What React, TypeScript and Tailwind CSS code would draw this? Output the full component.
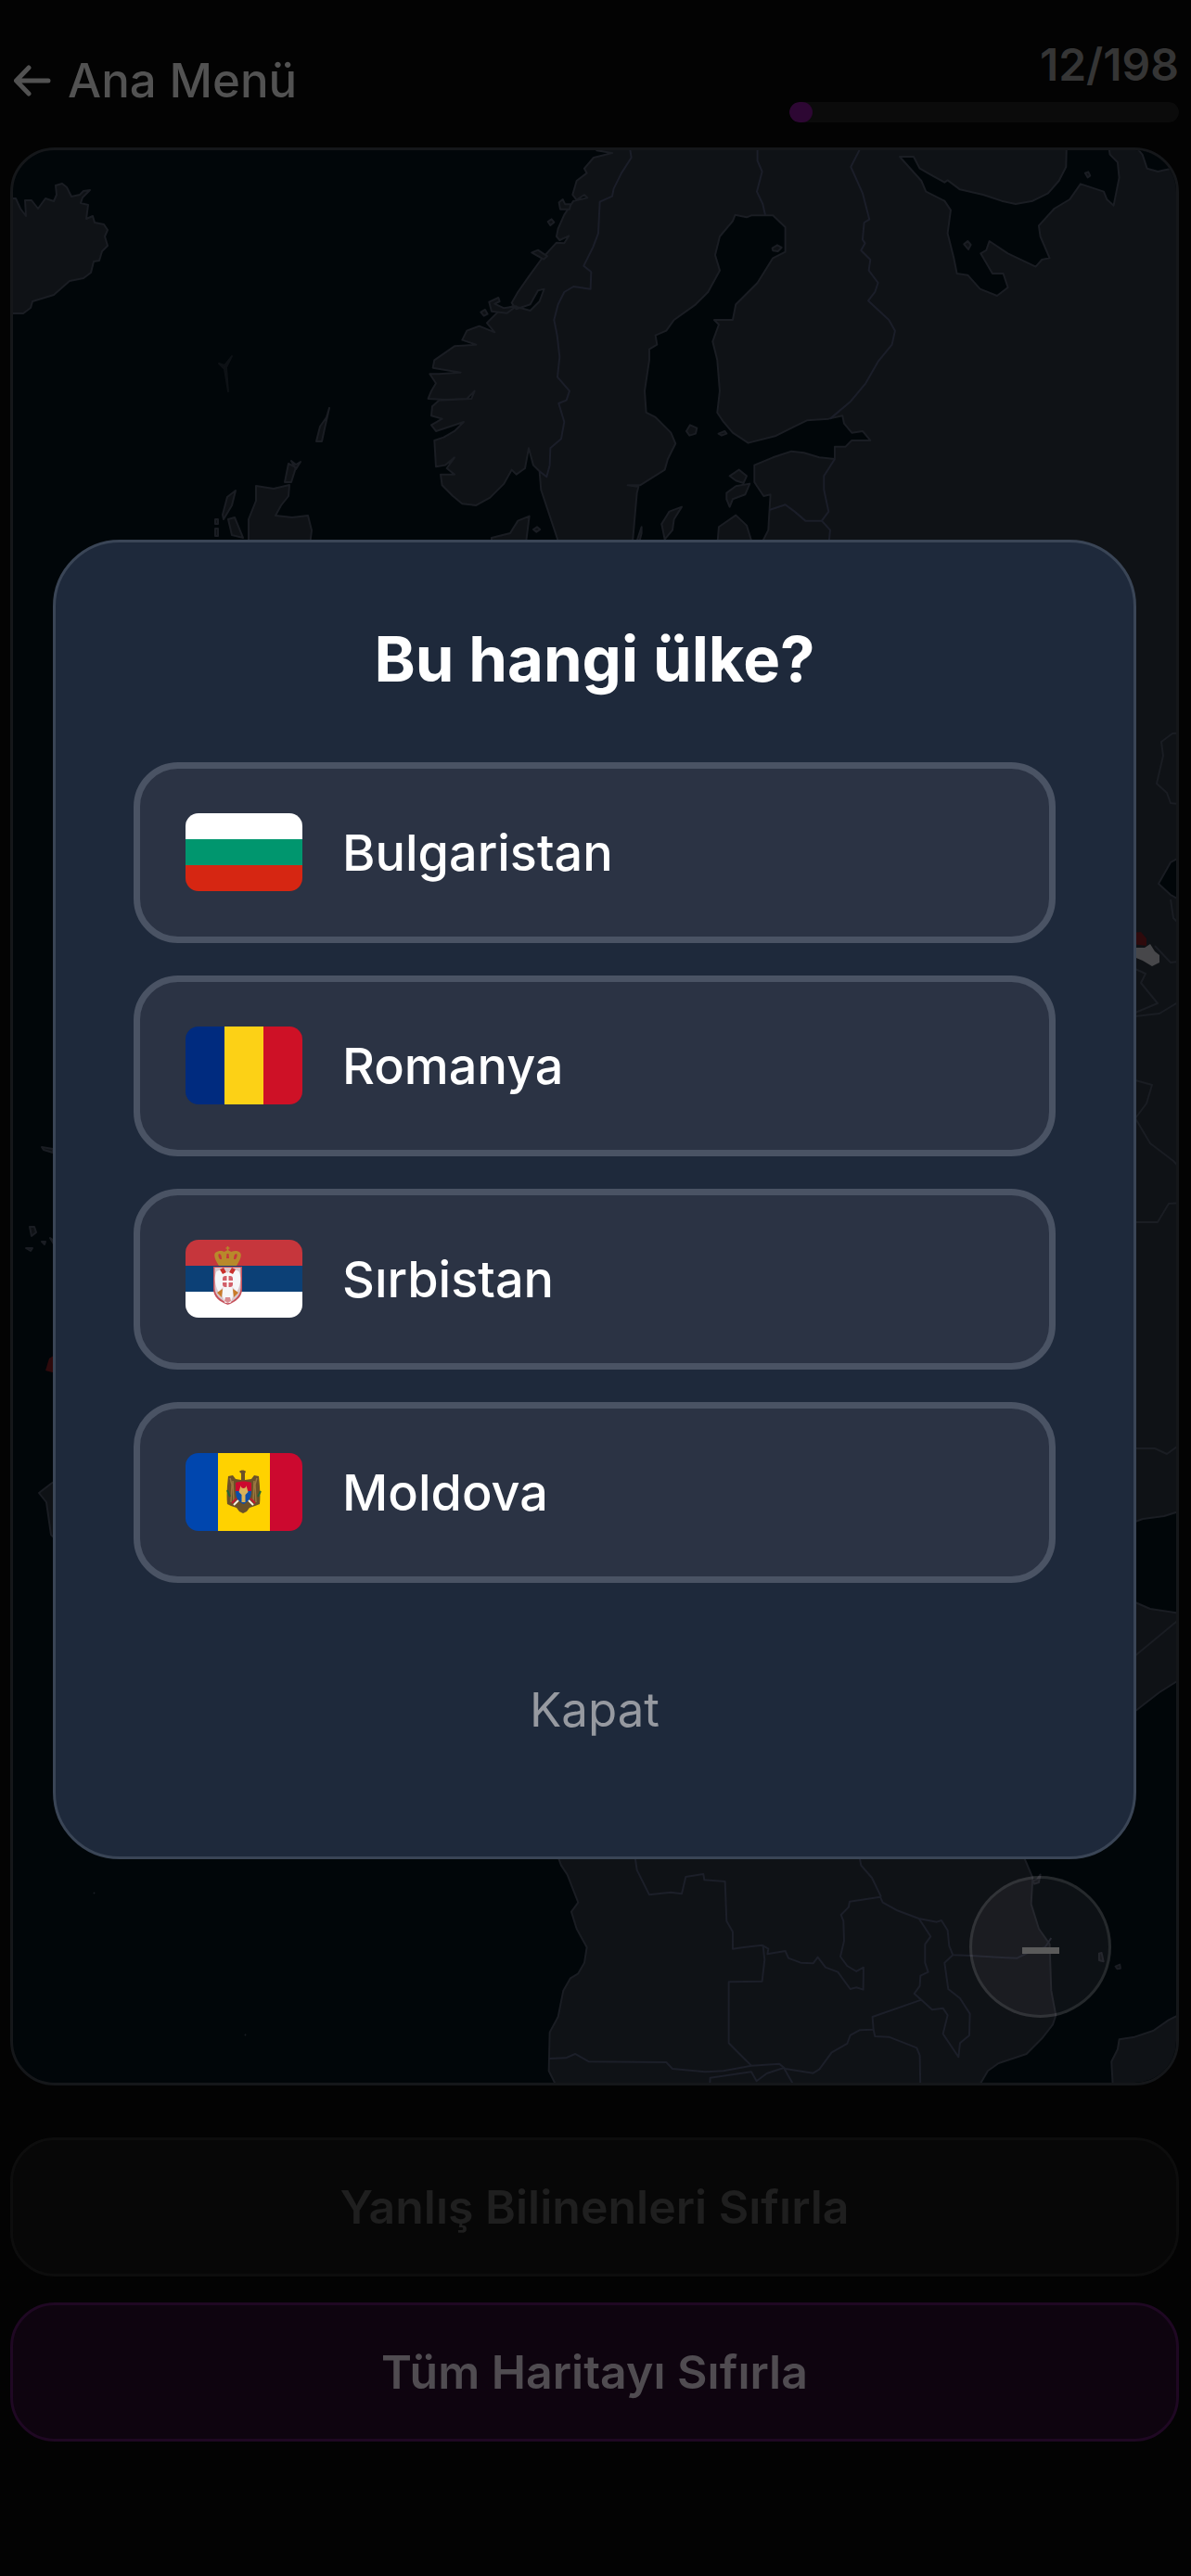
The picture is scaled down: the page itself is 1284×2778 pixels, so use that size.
import type { ReactNode } from "react";

function BulgariaFlag() {
  return (
    <>
      <rect width="126" height="28" fill="#ffffff" />
      <rect y="28" width="126" height="28" fill="#00966e" />
      <rect y="56" width="126" height="28" fill="#d62612" />
    </>
  );
}

function RomaniaFlag() {
  return (
    <>
      <rect width="42" height="84" fill="#002b7f" />
      <rect x="42" width="42" height="84" fill="#fcd116" />
      <rect x="84" width="42" height="84" fill="#ce1126" />
    </>
  );
}

function SerbiaFlag() {
  return (
    <>
      <rect width="126" height="28" fill="#c6363c" />
      <rect y="28" width="126" height="28" fill="#0c4076" />
      <rect y="56" width="126" height="28" fill="#ffffff" />
      <path d="M30 29h31v24c0 9-7 14-15.500 17C37 67 30 62 30 53z" fill="#c6505a" />
      <path d="M31.500 30h28v22c0 8-6 13-14 16.500C38 65 31.500 60 31.500 52z" fill="#d9c5cb" />
      <path d="M45.500 36c-2-3-4-5-7-4l-5 2c-3 6-2 15 2 22l5-5-1 9 3 8h6l3-8-1-9 5 5c4-7 5-16 2-22l-5-2c-3-1-5 1-7 4z" fill="#f6f6f8" />
      <path d="M37 32l4-2 3 5-4 2zM54 32l-4-2-3 5 4 2z" fill="#c9302c" />
      <rect x="40" y="39" width="11" height="12" rx="3" fill="#d2606a" />
      <path d="M44.500 39h2v5h4.500v2h-4.500v5h-2v-5H40v-2h4.500z" fill="#fff" />
      <path d="M34 57l6-4-1 9zM57 57l-6-4 1 9z" fill="#c97a28" />
      <path d="M43 62h5l1 4-3.500 2-3.500-2z" fill="#d98a8f" />
      <path d="M36 28c-4-6-6-11-4-14 4-3 8-2 10-1 2-2 5-2 7 0 3-1 7-2 10 1 2 3 0 8-4 14z" fill="#b8892b" />
      <path d="M37 21c-2-3-2-5-1-6 2 0 3 2 3 6zM54 21c2-3 2-5 1-6-2 0-3 2-3 6zM44 20l.500-5h2l.500 5z" fill="#c6363c" />
      <path d="M45.500 7v5M43.500 9h4" stroke="#b5852a" strokeWidth="1.500" />
    </>
  );
}

function MoldovaFlag() {
  return (
    <>
      <rect width="36" height="84" fill="#0046ae" />
      <rect x="35" width="57" height="84" fill="#ffd200" />
      <rect x="91" width="35" height="84" fill="#cc092f" />
      <path d="M58 20c1-2 6-2 7 0l-1 2v7l7-1 3-4 5 1c1 10 2 20 1 30l-5 2-6 2-3 4-4 2-4-2-3-4-6-2-4-2c-1-10 0-20 1-30l5-1 3 4 6 1v-7z" fill="#6b5128" />
      <path d="M48 27l2 7-1 19M77 27l-2 7 1 19M51 30l1 22M74 30l-1 22" stroke="#9a7740" strokeWidth="1.500" fill="none" />
      <path d="M54 32c6-2 11-2 17 0v9H54z" fill="#cc092f" />
      <path d="M54 41h17c0 8-4 12-8.500 14C58 53 54 49 54 41z" fill="#0d4ea8" />
      <path d="M59.500 35c0 4 6 4 6 0l2 7-3 3v8h-4v-8l-3-3z" fill="#d9b25a" />
      <path d="M52 56l5-5M73 56l-5-5" stroke="#f7f0e0" strokeWidth="2" />
      <path d="M50 54l5-5M75 54l-5-5" stroke="#c21a30" strokeWidth="2" />
      <path d="M45 40l3 7M81 41l-3 6" stroke="#24653a" strokeWidth="2" />
    </>
  );
}

function Flag({ children }: { children: ReactNode }) {
  return (
    <svg viewBox="0 0 126 84" className="h-[84px] w-[126px] shrink-0 rounded-[14px]" aria-hidden="true">
      {children}
    </svg>
  );
}

const northernLand =
  "M720,0 L610,22 660,30 600,45 570,80 578,95 545,120 532,165 545,182 570,165 580,175 535,185 505,230 485,275 480,300 490,312 520,298 505,322 480,320 430,375 390,430 355,480 335,515 350,535 395,520 420,475 440,470 425,510 395,540 340,525 290,545 255,580 280,610 230,590 190,605 175,635 220,650 150,655 85,700 80,725 170,740 100,745 70,745 90,775 75,800 65,825 120,828 190,825 215,800 205,825 100,830 78,850 75,880 110,890 75,910 90,930 180,900 150,930 115,950 85,960 90,1045 120,1040 150,1015 125,1050 150,1070 105,1070 110,1105 145,1140 175,1165 220,1170 265,1145 310,1100 335,1055 350,1070 378,1050 390,985 405,1040 425,1060 430,1120 450,1180 490,1300 725,1300 740,1130 745,1110 710,1105 750,1105 830,1055 840,1020 865,970 850,935 800,885 770,870 765,800 780,700 780,665 805,650 800,620 835,605 860,570 930,520 970,480 1008,410 993,360 1008,300 1050,250 1058,230 1095,238 1110,232 1180,232 1220,270 1220,350 1180,370 1130,450 1060,520 1050,570 990,570 1005,585 985,640 1000,700 1008,800 1000,870 1020,900 1050,935 1100,968 1190,945 1250,915 1290,895 1360,890 1405,880 1410,905 1435,935 1470,930 1495,960 1435,960 1415,980 1380,980 1380,1020 1330,1015 1280,1000 1240,995 1180,1015 1120,1040 1120,1095 1150,1140 1172,1135 1168,1200 1165,1250 1140,1300 1140,1400 2520,1400 2520,0 Z";

function WorldMap() {
  return (
    <svg
      viewBox="14 162 1254 2084"
      className="block h-auto w-full fill-[#0f1216] stroke-[#1a1d23]"
      strokeWidth="2"
      strokeLinejoin="round"
      role="img"
      aria-label="Dünya haritası"
    >
      {/* Iceland */}
      <path d="M5,214 L17,214 22,225 28,233 27,216 34,216 41,225 49,214 58,217 61,210 60,200 67,198 72,202 77,212 86,210 90,206 97,205 89,213 87,219 95,221 93,236 100,233 102,240 112,242 116,248 113,255 116,265 110,271 107,281 101,282 98,294 90,300 75,303 58,318 35,325 33,332 25,338 5,338 Z" />

      {/* Scandinavia, the Baltic and Russia */}
      <g transform="translate(440 155) scale(0.3333)" strokeWidth="6">
        <path d={northernLand} />
        <g fill="none" stroke="#1b1e29">
          <path d="M715,0 L722,45 690,95 665,145 660,170 620,188 615,290 598,335 568,395 592,415 590,470 535,462 505,480 485,520 472,570 482,620 490,690 483,755 522,800 512,830 487,840 505,900 495,955 460,985 458,1040 448,1078 425,1060" />
          <path d="M1130,0 L1130,55 1145,90 1128,155 1147,195 1155,230" />
          <path d="M1465,10 L1432,75 1470,160 1492,245 1475,255 1470,310 1478,322 1465,345 1495,375 1490,410 1520,450 1510,480 1488,508 1555,570 1575,605 1565,650 1520,705 1480,775 1430,835 1365,890" />
          <path d="M1380,1020 L1345,1075 1345,1120 1360,1190 1338,1220 1365,1250 1360,1300" />
          <path d="M1168,1185 L1220,1168 1250,1190 1285,1220 1340,1220" />
        </g>
        <g fill="#010609">
          <path d="M1590,42 L1635,42 1655,80 1690,100 1735,125 1745,118 1785,148 1860,165 1920,185 1965,195 2020,185 2070,160 2105,120 2128,75 2130,0 2265,0 2270,35 2295,60 2300,110 2282,200 2260,180 2250,155 2175,130 2140,180 2090,210 2040,265 2045,300 2075,370 2050,375 2030,398 1940,355 1880,315 1870,345 1852,355 1890,420 1925,420 1940,465 1905,492 1850,470 1810,425 1775,420 1765,370 1745,290 1755,215 1735,185 1675,155 1660,120 Z" />
          <path d="M2345,0 L2375,35 2390,80 2425,90 2480,78 2520,60 2520,0 Z" />
        </g>
        <path d="M2190,95l10,-4 6,12-8,6zM1798,325l12,-10 10,12-8,15z" />
        <path d="M488,190l12,-10 8,16 18,0-4,16-30,0zM452,252l12,-8 8,10-12,10zM400,352l20,-8 30,20-12,10zM235,545l14,-8 8,14-12,6zM262,512l30,-14 4,12-16,8 30,14 40,-6-30,22-50,-6z" />
        <path d="M1178,338l16,-10 14,8-12,12-16,-2zM900,930l12,-20 22,10-4,18-20,6zM1004,938l20,-8 6,8-16,6z" />
        <path d="M1040,1075 L1070,1055 1095,1075 1085,1098 1060,1090Z M1030,1130 L1060,1108 1105,1100 1090,1135 1050,1150 1040,1175 1030,1150Z" />
        <path d="M820,1230 L845,1190 885,1175 860,1215 855,1250 830,1280Z M1000,1300 L1005,1240 1060,1202 1095,1235 1115,1300Z" />
        <path d="M270,1275 L330,1260 355,1220 392,1205 380,1300 270,1300Z M405,1248l12,-8 10,8-12,8zM735,1300l20,-60 0,20-10,40z" />
      </g>

      {/* British Isles */}
      <path d="M262,620 L268,585 268,560 276,540 276,524 295,527 312,523 311,535 303,545 297,556 315,558 332,556 336,572 330,620 Z M240,555 L245,536 254,529 250,545 241,560Z M246,560 L253,558 262,580 250,577Z M307,520l4,-20 8,4-5,16zM341,476 L345,460 352,450 355,440 350,462 347,476Z M314,497l5,4 5,-3-5,8z M232,560l3,0 0,5-3,0zM232,570l3,0 0,8-3,0z" />
      <path d="M236,392l6,2 8,-10-6,12 2,26-4,-24z" stroke="#0d1115" />

      {/* Land along the eastern edge */}
      <path d="M1210,600 L1280,600 1280,1627 1255,1635 1232,1638 1210,1646 Z" stroke="none" />
      <path d="M1210,1646 L1232,1638 1255,1635 1280,1627" fill="none" />
      <path d="M1210,1722 L1240,1735 1280,1741 1280,1806 1250,1825 1210,1856 Z M1210,1797 L1280,1739" />
      <path d="M1280,920 L1262,930 1249,953 1262,965 1280,975 Z" fill="#010609" />
      <g fill="none">
        <path d="M1280,790 L1264,791 1252,800 1254,815 1247,845 1258,855 1262,866 1280,868" />
        <path d="M1262,970 L1265,990 1280,1005 M1245,1020 L1262,1038 1280,1036 M1224,1045 L1235,1050 1230,1060 1248,1082 1224,1092 M1224,1096 L1250,1093 1280,1075" />
        <path d="M1224,1165 L1242,1170 1236,1190 1224,1206 1240,1233 1265,1252 1280,1268 M1224,1318 L1248,1318 1260,1298 1280,1297 M1224,1562 L1245,1562 1258,1568 1280,1552" />
      </g>
      <path d="M1220,1006l10,-1 6,7 0,8-16,-2z" fill="#2e0a0c" stroke="none" />
      <path d="M1220,1022l14,0 6,-4 5,8 5,4 0,8-8,4-10,-6-12,-5z" fill="#47474a" stroke="none" />

      {/* Atlantic islands and the West African coast */}
      <path d="M45,1237l12,2 0,4-10,-3zM32,1323l5,0 2,6-5,4zM28,1346l7,0-2,3zM45,1339l4,0-1,3zM54,1335l6,4 0,6z" />
      <path d="M64,1458 L53,1465 49,1478 64,1482Z" fill="#2e0a0c" stroke="none" />
      <path d="M70,1590 L55,1600 42,1610 50,1620 55,1655 70,1670Z" />

      {/* Southern Africa */}
      <g transform="translate(580 2000) scale(0.3333)" strokeWidth="6">
        <path d="M55,-20 L75,35 95,65 130,155 108,185 125,240 158,300 150,350 130,385 105,400 82,440 65,525 38,575 35,700 65,760 1420,760 1455,700 1490,675 1580,645 1630,595 1665,550 1675,520 1660,440 1655,290 1620,240 1595,160 1600,75 1560,-20Z" />
        <g fill="none" stroke="#1c1f29">
          <path d="M310,-20 L320,50 360,130 430,122 465,127 478,72 535,63 538,82 605,87 610,215 630,250 630,305 665,300 725,293 745,305 742,322 800,312 810,335 850,350 890,352 905,332 930,365 970,380 1010,435 1030,430 1052,437 1053,365 1030,378 1000,360 978,330 990,280 988,215 980,195 1005,170 1008,152 1107,137 1115,155 1160,180 1232,207 1290,218 1305,213 1325,245 1330,295 1342,325 1400,327 1500,333 1550,335 1590,315 1640,300 1660,270" />
          <path d="M1035,-20 L1045,35 1080,75 1110,137 M728,295 L733,340 725,410 617,412 617,610 690,683" />
          <path d="M35,660 L90,658 120,645 165,670 415,672 435,693 540,703 600,700 690,683 780,677 800,693 890,707 910,695 950,640 1000,612 1010,585 1040,568 1085,566 1082,525 1240,470 1275,502 1310,497 1325,520 1310,580 1360,655 1365,610 1395,585 1397,515 1365,465 1327,435 1315,350 1342,325" />
          <path d="M1232,207 L1270,265 1252,290 1252,350 1262,380 1237,392 1235,425 1217,450 1240,470 M1085,566 L1090,588 1135,590 1225,625 1235,650 1237,760 M555,760 L557,722 690,703 707,733 740,708 795,690 835,760" />
        </g>
        <path d="M1600,85l15,-5 10,-15-5,25-14,5zM1655,-20l10,30-10,-5-20,-25zM1815,320l8,-2 6,28-14,-4zM1868,362l14,-6 2,12-10,2z" />
        <path d="M1860,760 L1855,670 1875,630 1880,598 1930,590 1990,570 2040,535 2110,500 2110,760Z" />
      </g>
      <path d="M101,2041l1,1M264,2194l1,1" />
    </svg>
  );
}

const options = [
  { name: "Bulgaristan", flag: <BulgariaFlag /> },
  { name: "Romanya", flag: <RomaniaFlag /> },
  { name: "Sırbistan", flag: <SerbiaFlag /> },
  { name: "Moldova", flag: <MoldovaFlag /> },
];

export default function App() {
  return (
    <div className="min-h-screen bg-[#030303] font-['Inter',sans-serif]">
      <div className="flex flex-col pr-[13px] pl-[11px]">
        <header className="flex h-[159px] items-start justify-between">
          <button type="button" className="mt-[54px] flex items-center gap-4 text-[51px] leading-[66px] font-medium text-[#525252]">
            <svg viewBox="0 0 42 36" className="ml-1 h-9 w-[42px]" fill="none" stroke="currentColor" strokeWidth="5" strokeLinecap="round" strokeLinejoin="round" aria-hidden="true">
              <path d="M16 4L2.500 18 16 32M3 18h34" />
            </svg>
            Ana Menü
          </button>
          <div className="mt-10 flex w-1/3 flex-col items-end gap-[10px]">
            <span className="text-[48px] leading-[60px] font-semibold text-[#353535]">12/198</span>
            <div className="h-[22px] w-full overflow-hidden rounded-full bg-[#0b0b0b]" role="progressbar" aria-label="İlerleme" aria-valuenow={12} aria-valuemin={0} aria-valuemax={198}>
              <div className="h-full rounded-full bg-[#2d0733]" style={{ width: `${(12 / 198) * 100}%` }} />
            </div>
          </div>
        </header>

        <section className="relative overflow-hidden rounded-[48px] border-[3px] border-[#15171a] bg-[#010609]">
          <WorldMap />
          <button type="button" aria-label="Uzaklaştır" className="absolute right-[70px] bottom-[70px] flex size-[153px] items-center justify-center rounded-full border-[3px] border-white/10 bg-[#dcc8dc]/6 pt-2">
            <span className="h-[7px] w-10 bg-[#5a5a5a]" />
          </button>
        </section>

        <div className="mt-14 flex flex-col gap-7">
          <button type="button" disabled className="h-[150px] rounded-[48px] border-[3px] border-[#0d0d0d] bg-[#070707] text-[50px] font-semibold text-[#1f1f1f]">
            Yanlış Bilinenleri Sıfırla
          </button>
          <button type="button" className="h-[150px] rounded-[48px] border-[3px] border-[#1f0823] bg-[#0e040f] text-[50px] font-semibold text-[#504c51]">
            Tüm Haritayı Sıfırla
          </button>
        </div>
      </div>

      <div className="fixed inset-0 flex items-center justify-center pr-[59px] pb-48 pl-[57px]">
        <div role="dialog" aria-modal="true" aria-labelledby="question" className="flex w-full flex-col rounded-[72px] border-[3px] border-[#3a4556] bg-[#1e293b] p-[84px]">
          <h2 id="question" className="text-center text-[67px] leading-[84px] font-bold text-white">Bu hangi ülke?</h2>
          <div className="mt-[69px] flex flex-col gap-[35px]">
            {options.map((option) => (
              <button key={option.name} type="button" className="flex h-[195px] items-center gap-[43px] rounded-[48px] border-[7px] border-[#4a5364] bg-[#2b3344] px-[49px] text-[54px] font-medium text-white">
                <Flag>{option.flag}</Flag>
                {option.name}
              </button>
            ))}
          </div>
          <button type="button" className="mt-16 h-[147px] self-center px-12 text-[51px] text-[#9699a0]">Kapat</button>
        </div>
      </div>
    </div>
  );
}
